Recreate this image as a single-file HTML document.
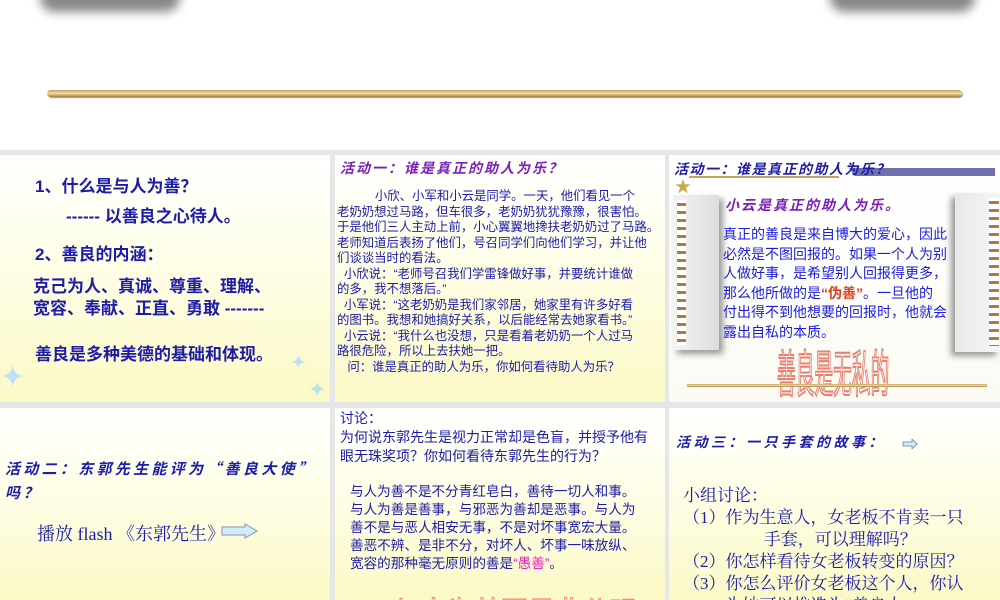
<!DOCTYPE html>
<html><head><meta charset="utf-8"><style>
*{margin:0;padding:0;box-sizing:border-box}
body{width:1000px;height:600px;overflow:hidden;background:#fff;position:relative;font-family:"Liberation Sans","Noto Sans CJK SC",sans-serif}
.a{position:absolute;white-space:nowrap}
.s{position:absolute;background:linear-gradient(#ffffff 0%,#fefde6 45%,#fbf9c6 100%);overflow:hidden}
.b{color:#1c1ca8}
.t{color:#7a1fb8;font-weight:bold;font-style:italic;font-family:"Noto Sans CJK SC",sans-serif}
.tb{color:#1c1ca8;font-weight:bold;font-style:italic;font-family:"Noto Sans CJK SC",sans-serif}
.dots{position:absolute;background:repeating-linear-gradient(#fff 0 3px,#b07840 3px 6px,#fff 6px 8px)}
</style></head><body>
<div class="a" style="left:40px;top:-20px;width:140px;height:32px;background:#888;border-radius:14px;filter:blur(5px)"></div>
<div class="a" style="left:830px;top:-20px;width:145px;height:32px;background:#888;border-radius:14px;filter:blur(5px)"></div>
<div class="a" style="left:47px;top:90px;width:915px;height:7px;border-radius:4px;background:linear-gradient(#c8a060,#f3dc9c 50%,#a27a40);box-shadow:1px 1px 1px #999"></div>
<div class="a" style="left:0;top:150px;width:1000px;height:450px;background:#e6e6e6"></div>

<!-- slide1 -->
<div class="s" style="left:0;top:155px;width:330px;height:247px">
<div class="a b" style="left:35px;top:17px;font-size:17px;font-weight:bold">1、什么是与人为善？</div>
<div class="a b" style="left:66px;top:47px;font-size:17px;font-weight:bold">------ 以善良之心待人。</div>
<div class="a b" style="left:35px;top:85px;font-size:17px;font-weight:bold">2、善良的内涵：</div>
<div class="a b" style="left:33px;top:121px;font-size:17px;font-weight:bold;line-height:22px">克己为人、真诚、尊重、理解、<br>宽容、奉献、正直、勇敢 -------</div>
<div class="a b" style="left:35px;top:185px;font-size:17px;font-weight:bold">善良是多种美德的基础和体现。</div>
<div class="a" style="left:0;top:205px;font-size:30px;color:#bfe0f0">✦</div>
<div class="a" style="left:290px;top:195px;font-size:20px;color:#bfe0f0">✦</div>
<div class="a" style="left:308px;top:222px;font-size:22px;color:#bfe0f0">✦</div>
</div>

<!-- slide2 -->
<div class="s" style="left:335px;top:155px;width:330px;height:247px">
<div class="a t" style="left:5px;top:3px;font-size:14px;letter-spacing:2px">活动一：谁是真正的助人为乐？</div>
<div class="a b" style="left:2px;top:34px;font-size:12.4px;line-height:15.5px;white-space:nowrap">
&nbsp;&nbsp;&nbsp;&nbsp;&nbsp;&nbsp;&nbsp;&nbsp;&nbsp;&nbsp;&nbsp;小欣、小军和小云是同学。一天，他们看见一个<br>老奶奶想过马路，但车很多，老奶奶犹犹豫豫，很害怕。<br>于是他们三人主动上前，小心翼翼地搀扶老奶奶过了马路。<br>老师知道后表扬了他们，号召同学们向他们学习，并让他<br>们谈谈当时的看法。<br>&nbsp;&nbsp;小欣说：“老师号召我们学雷锋做好事，并要统计谁做<br>的多，我不想落后。”<br>&nbsp;&nbsp;小军说：“这老奶奶是我们家邻居，她家里有许多好看<br>的图书。我想和她搞好关系，以后能经常去她家看书。”<br>&nbsp;&nbsp;小云说：“我什么也没想，只是看着老奶奶一个人过马<br>路很危险，所以上去扶她一把。<br>&nbsp;&nbsp;&nbsp;问：谁是真正的助人为乐，你如何看待助人为乐？</div>
</div>

<!-- slide3 -->
<div class="s" style="left:669px;top:155px;width:331px;height:247px;background:linear-gradient(#fff,#fbfbf4)">
<div class="a" style="left:180px;top:13px;width:146px;height:8px;background:#7070b0;clip-path:polygon(0 0,100% 0,100% 100%,4% 100%)"></div>
<div class="a" style="left:20px;top:21px;width:150px;height:2px;background:#c8a060"></div>
<div class="a t" style="left:5px;top:4px;font-size:14px;color:#1c1ca8;letter-spacing:1.5px">活动一：谁是真正的助人为乐？</div>
<div class="a" style="left:6px;top:18px;font-size:16px;color:#c8a850">★</div>
<div class="a" style="left:4px;top:40px;width:46px;height:155px;background:linear-gradient(90deg,#f4f4f4,#ddd);box-shadow:4px 4px 6px #999"></div>
<div class="dots" style="left:8px;top:45px;width:9px;height:145px"></div>
<div class="a" style="left:286px;top:38px;width:45px;height:159px;background:linear-gradient(90deg,#e8e8e8,#f6f6f6);box-shadow:-4px 4px 6px #999"></div>
<div class="dots" style="left:320px;top:43px;width:10px;height:148px"></div>
<div class="a t" style="left:56px;top:40px;font-size:14px;letter-spacing:2px">小云是真正的助人为乐。</div>
<div class="a" style="left:54px;top:70px;font-size:14px;color:#1c1ce0;line-height:19.5px">真正的善良是来自博大的爱心，因此<br>必然是不图回报的。如果一个人为别<br>人做好事，是希望别人回报得更多，<br>那么他所做的是<span style="color:#e04020;font-weight:bold">“伪善”</span>。一旦他的<br>付出得不到他想要的回报时，他就会<br>露出自私的本质。</div>
<div class="a" style="left:108px;top:178px;font-size:24px;color:#fff;-webkit-text-stroke:1px #e88070;transform:scale(0.78,2.1);transform-origin:top left">善良是无私的</div>
<div class="a" style="left:18px;top:229px;width:300px;height:3px;background:linear-gradient(#c8a060,#f3dc9c,#a27a40)"></div>
</div>

<!-- slide4 -->
<div class="s" style="left:0;top:408px;width:330px;height:192px">
<div class="a tb" style="left:5px;top:49px;font-size:15px;letter-spacing:3.3px;line-height:24px">活动二：东郭先生能评为“善良大使”<br>吗？</div>
<div class="a b" style="left:37px;top:112px;font-size:18px;font-family:'Liberation Serif','Noto Serif CJK SC',serif">播放 flash 《东郭先生》</div>
<svg class="a" style="left:221px;top:115px" width="38" height="16"><path d="M1 4H24V1L36 8L24 15V12H1Z" fill="#d4ecf8" stroke="#8098b8"/></svg>
</div>

<!-- slide5 -->
<div class="s" style="left:335px;top:408px;width:330px;height:192px">
<div class="a b" style="left:5px;top:1px;font-size:14px;line-height:19px">讨论：<br>为何说东郭先生是视力正常却是色盲，并授予他有<br>眼无珠奖项？你如何看待东郭先生的行为？</div>
<div class="a b" style="left:15px;top:75px;font-size:13.6px;line-height:18px">与人为善不是不分青红皂白，善待一切人和事。<br>与人为善是善事，与邪恶为善却是恶事。与人为<br>善不是与恶人相安无事，不是对坏事宽宏大量。<br>善恶不辨、是非不分，对坏人、坏事一味放纵、<br>宽容的那种毫无原则的善是<span style="color:#e020c0">“愚善”</span>。</div>
<div class="a" style="left:58px;top:176px;font-size:30px;color:#fff;-webkit-text-stroke:1px #f09070;transform:scale(0.9,1.4);transform-origin:top left">与人为善要是非分明</div>
</div>

<!-- slide6 -->
<div class="s" style="left:669px;top:408px;width:331px;height:192px">
<div class="a tb" style="left:7px;top:24px;font-size:14px;letter-spacing:3.5px">活动三：一只手套的故事：</div>
<svg class="a" style="left:233px;top:31px" width="16" height="10"><path d="M1 3H10V0L15 5L10 10V7H1Z" fill="#d4ecf8" stroke="#8098b8"/></svg>
<div class="a b" style="left:14px;top:77px;font-size:17px;line-height:22px;font-family:'Liberation Serif','Noto Serif CJK SC',serif">小组讨论：<br>（1）作为生意人，女老板不肯卖一只<br>&nbsp;&nbsp;&nbsp;&nbsp;&nbsp;&nbsp;&nbsp;&nbsp;&nbsp;&nbsp;&nbsp;&nbsp;&nbsp;&nbsp;&nbsp;&nbsp;&nbsp;&nbsp;&nbsp;手套，可以理解吗？<br>（2）你怎样看待女老板转变的原因？<br>（3）你怎么评价女老板这个人，你认<br>&nbsp;&nbsp;&nbsp;&nbsp;&nbsp;&nbsp;&nbsp;&nbsp;&nbsp;&nbsp;为她可以推选为“善良大</div>
</div>
</body></html>
